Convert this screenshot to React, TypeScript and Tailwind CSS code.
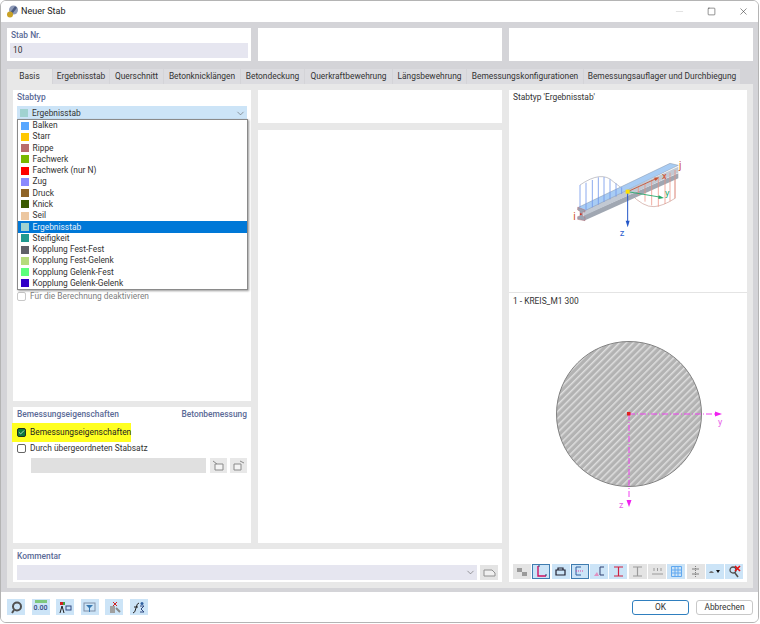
import React from 'react';
import { ChevronDown, Check, Minus, Square, X } from 'lucide-react';

const STAB_TYPES = [
  { name: 'Balken', color: '#57a7ff' },
  { name: 'Starr', color: '#ffc800' },
  { name: 'Rippe', color: '#b96b6b' },
  { name: 'Fachwerk', color: '#78b800' },
  { name: 'Fachwerk (nur N)', color: '#ff0000' },
  { name: 'Zug', color: '#8a8aff' },
  { name: 'Druck', color: '#8f6428' },
  { name: 'Knick', color: '#3a5a00' },
  { name: 'Seil', color: '#ecc7a0' },
  { name: 'Ergebnisstab', color: '#a0d2d0', active: true },
  { name: 'Steifigkeit', color: '#1f9a90' },
  { name: 'Kopplung Fest-Fest', color: '#5f6068' },
  { name: 'Kopplung Fest-Gelenk', color: '#b5db7c' },
  { name: 'Kopplung Gelenk-Fest', color: '#5cff7c' },
  { name: 'Kopplung Gelenk-Gelenk', color: '#3300c8' },
];

const TABS = [
  { label: 'Basis', width: 'w-[45px]' },
  { label: 'Ergebnisstab', width: 'w-[56px]' },
  { label: 'Querschnitt', width: 'w-[53px]' },
  { label: 'Betonknicklängen', width: 'w-[76px]' },
  { label: 'Betondeckung', width: 'w-[63px]' },
  { label: 'Querkraftbewehrung', width: 'w-[87px]' },
  { label: 'Längsbewehrung', width: 'w-[73px]' },
  { label: 'Bemessungskonfigurationen', width: 'w-[116px]' },
  { label: 'Bemessungsauflager und Durchbiegung', width: 'w-[156px]' },
];

function AppIcon() {
  return (
    <svg width="13" height="13" viewBox="0 0 13 13">
      <circle cx="7.5" cy="5" r="4.5" fill="#8f9bb8" />
      <path d="M3 11 L10 2" stroke="#4a5a80" strokeWidth="2.5" />
      <circle cx="4" cy="9.5" r="3" fill="#c9a227" />
    </svg>
  );
}

// drawn in 3x coordinates, same as the crop of the beam
function BeamPreview() {
  const blue = [
    [150, 165, 232],
    [168, 158, 240],
    [187, 150, 232],
    [205, 142, 224],
    [222, 141, 216],
    [240, 148, 208],
    [258, 160, 200],
    [275, 172, 192],
  ];
  const red = [
    [325, 170, 197],
    [345, 161, 215],
    [365, 152, 226],
    [385, 143, 230],
    [405, 135, 222],
    [420, 128, 214],
    [435, 120, 205],
  ];
  return (
    <svg width="180" height="120" viewBox="0 0 540 360" className="block">
      <path d="M150 165 Q215 120 250 155 Q270 172 293 185" fill="none" stroke="#a8a8b0" strokeWidth="2" />
      <path d="M300 190 Q340 232 372 230 Q400 228 435 205 L435 120" fill="none" stroke="#c89c94" strokeWidth="2" />
      {/* beam */}
      <path d="M162 272 L445 145 L445 130 L162 255 Z" fill="#a0a7b2" />
      <path d="M160 258 L445 128 L445 110 L160 240 Z" fill="#c2c9d3" />
      <path d="M145 232 L420 100 L445 106 L165 242 Z" fill="#a8ccf4" stroke="#8a96aa" strokeWidth="1.5" />
      <path d="M143 232 L165 240 L165 246 L158 246 L158 258 L165 262 L165 272 L143 268 L143 260 L150 258 L150 244 L143 240 Z" fill="#9aa2b0" stroke="#b87078" strokeWidth="1.5" />
      {blue.map(([x, y1, y2]) => (
        <line key={x} x1={x} y1={y1} x2={x} y2={y2} stroke="#6f94ea" strokeWidth="2.4" />
      ))}
      {red.map(([x, y1, y2]) => (
        <line key={x} x1={x} y1={y1} x2={x} y2={y2} stroke="#ec8f80" strokeWidth="2.2" />
      ))}
      {/* axes */}
      <line x1="293" y1="185" x2="378" y2="146" stroke="#c8502e" strokeWidth="2.6" />
      <path d="M387 142 L372 143 L377 153 Z" fill="#c8502e" />
      <line x1="293" y1="185" x2="388" y2="201" stroke="#22a868" strokeWidth="2.6" />
      <path d="M402 204 L386 196 L385 207 Z" fill="#22a868" />
      <line x1="293" y1="185" x2="293" y2="276" stroke="#2457c8" strokeWidth="3" />
      <path d="M293 292 L287 272 L299 272 Z" fill="#2457c8" />
      <rect x="287" y="179" width="12" height="12" fill="#ffe000" />
      <rect x="150" y="250" width="5" height="5" fill="#d03020" />
      <text x="447" y="118" fontSize="30" fill="#d0502a">j</text>
      <text x="396" y="148" fontSize="28" fill="#d0502a">x</text>
      <text x="405" y="198" fontSize="28" fill="#22a868">y</text>
      <text x="269" y="318" fontSize="28" fill="#2f5fd0">z</text>
      <text x="130" y="270" fontSize="30" fill="#d0502a">i</text>
    </svg>
  );
}

function SectionPreview() {
  return (
    <svg width="180" height="180" viewBox="0 0 180 180" className="block">
      <defs>
        <pattern id="hatch" width="4.9" height="4.9" patternUnits="userSpaceOnUse" patternTransform="rotate(45)">
          <rect width="4.9" height="4.9" fill="#b3b3b3" />
          <rect width="1.5" height="4.9" fill="#dedede" />
        </pattern>
      </defs>
      <circle cx="85" cy="73" r="72.5" fill="url(#hatch)" stroke="#828282" strokeWidth="1" />
      <line x1="85" y1="73" x2="172" y2="73" stroke="#f040f0" strokeWidth="1" strokeDasharray="6 2 1 2" />
      <line x1="85" y1="73" x2="85" y2="158" stroke="#f040f0" strokeWidth="1" strokeDasharray="6 2 1 2" />
      <path d="M178 73 L171 70.5 L171 75.5 Z" fill="#f020f0" />
      <path d="M85 166 L82.5 159 L87.5 159 Z" fill="#f020f0" />
      <rect x="83" y="71" width="3.5" height="3.5" fill="#e02020" />
      <text x="174" y="84" fontSize="9" fill="#e860e8">y</text>
      <text x="75" y="167" fontSize="9" fill="#e860e8">z</text>
    </svg>
  );
}

function ToolBtn({ on, border, children }: { on?: boolean; border?: boolean; children: React.ReactNode }) {
  return (
    <div className={`w-[18px] h-[15px] flex items-center justify-center ${on ? 'bg-[#cce4f7]' : 'bg-[#e4e4e4]'} ${border ? 'border border-[#3f7cb0]' : ''}`}>
      {children}
    </div>
  );
}

function Ico({ children }: { children: React.ReactNode }) {
  return <svg width="13" height="13" viewBox="0 0 13 13" fill="none">{children}</svg>;
}

function FooterBtn({ children }: { children: React.ReactNode }) {
  return <div className="w-[18px] h-[16px] bg-[#cce4f7] flex items-center justify-center">{children}</div>;
}

export default function App() {
  return (
    <div className="w-[760px] h-[624px] font-['Roboto',sans-serif] text-[8.4px] leading-[11px] text-[#333] bg-white flex flex-col">
      <div className="w-[759px] h-[623px] border border-[#b4b4b4] rounded-[6px] flex flex-col overflow-hidden">
        {/* title bar */}
        <div className="h-[21px] shrink-0 bg-white flex items-center pl-[5px]">
          <AppIcon />
          <span className="ml-[2px] text-[9px] text-[#222]">Neuer Stab</span>
          <div className="ml-auto flex items-center text-[#333]">
            <Minus size={11} strokeWidth={1} className="text-[#c0c0c0] mr-[22px]" />
            <Square size={9} strokeWidth={1.4} className="mr-[22px]" />
            <X size={11} strokeWidth={1.2} className="mr-[9px]" />
          </div>
        </div>

        <div className="flex-1 bg-[#d4d4d8] px-[6px] pt-[6px] flex flex-col">
          {/* top row */}
          <div className="grid grid-cols-[244px_244px_244px] gap-x-[7px] h-[33px] shrink-0">
            <div className="bg-white px-[3px] pt-[1px]">
              <div className="font-medium text-[#5a6a96] h-[12px] leading-[12px] pl-[1px]">Stab Nr.</div>
              <div className="mt-[2px] h-[15px] bg-[#e6e6f0] pl-[3px] leading-[15px]">10</div>
            </div>
            <div className="bg-white" />
            <div className="bg-white" />
          </div>

          {/* tabs */}
          <div className="mt-[8px] h-[15px] flex shrink-0 gap-[1px]">
            {TABS.map((t, i) => (
              <div
                key={t.label}
                className={`h-[15px] flex items-center justify-center whitespace-nowrap ${t.width} ${i === 0 ? 'bg-[#e8e8e8]' : 'bg-[#dcdce0]'}`}
              >
                {t.label}
              </div>
            ))}
          </div>

          {/* tab page */}
          <div className="h-[504px] shrink-0 bg-[#e8e8e8] w-[746px] p-[6px] grid grid-cols-[238px_244px_238px] grid-rows-[33px_7px_1fr_6px_33px] gap-x-[7px]">
            {/* left column */}
            <div className="row-start-1 row-span-3 flex flex-col gap-[6px] relative">
              <div className="bg-white h-[311px] px-[4px] pt-[1px] relative">
                <div className="font-medium text-[#5a6a96] h-[12px] leading-[12px]">Stabtyp</div>
                <div className="mt-[3px] h-[14px] bg-[#cce4f7] flex items-center pl-[3px] pr-[1px]">
                  <span className="w-[8px] h-[8px] bg-[#a0d2d0] mr-[3px]" />
                  <span className="ml-[1px]">Ergebnisstab</span>
                  <ChevronDown size={11} strokeWidth={1.2} className="ml-auto text-[#555]" />
                </div>
                <div className="absolute left-[4px] top-[29px] w-[231px] h-[171px] bg-white border border-[#8a8a8a] shadow-[1px_1px_2px_rgba(0,0,0,0.4)] z-10 flex flex-col">
                  {STAB_TYPES.map((s) => (
                    <div
                      key={s.name}
                      className={`h-[11.27px] flex items-center pl-[3px] ${s.active ? 'bg-[#0078d7] text-[#e8f2fa]' : ''}`}
                    >
                      <span className="w-[8px] h-[8px] mr-[3.5px]" style={{ backgroundColor: s.color }} />
                      <span>{s.name}</span>
                    </div>
                  ))}
                </div>
                <div className="absolute left-[4px] top-[201px] flex items-center text-[#808080]">
                  <span className="w-[9px] h-[9px] rounded-[2px] border border-[#c8c8c8] mr-[4px]" />
                  Für die Berechnung deaktivieren
                </div>
              </div>
              <div className="bg-white flex-1 px-[4px] pt-[2px] relative">
                <div className="flex justify-between font-medium text-[#5a6a96]">
                  <span>Bemessungseigenschaften</span>
                  <span>Betonbemessung</span>
                </div>
                <div className="mt-[3px] h-[19px] w-[119px] -ml-[5px] bg-[#ffff20] flex items-center pl-[5px] text-[#222]">
                  <span className="w-[9px] h-[9px] rounded-[2px] bg-[#0e7a3e] border border-[#203020] flex items-center justify-center mr-[4px]">
                    <Check size={7} strokeWidth={3} className="text-[#c8f0c8]" />
                  </span>
                  Bemessungseigenschaften
                </div>
                <div className="mt-[1px] flex items-center">
                  <span className="w-[9px] h-[9px] rounded-[2px] border border-[#666] mr-[4px]" />
                  Durch übergeordneten Stabsatz
                </div>
                <div className="mt-[4px] ml-[14px] flex gap-[3px] items-center">
                  <div className="w-[176px] h-[15px] bg-[#e0e0e0]" />
                  <div className="ml-[1px] w-[17px] h-[15px] bg-[#e8e8e8] flex items-center justify-center">
                    <Ico>
                      <path d="M3 5 H11 V11 H3 Z M1 2 L5 5" stroke="#8a8a8a" fill="#f4f4f4" />
                    </Ico>
                  </div>
                  <div className="w-[17px] h-[15px] bg-[#e8e8e8] flex items-center justify-center">
                    <Ico>
                      <path d="M2 5 H9 V11 H2 Z M8 2 L12 4" stroke="#8a8a8a" fill="#f4f4f4" />
                    </Ico>
                  </div>
                </div>
              </div>
            </div>

            {/* middle column */}
            <div className="row-start-1 col-start-2 bg-white" />
            <div className="row-start-3 col-start-2 bg-white" />

            {/* right column */}
            <div className="row-start-1 row-span-5 col-start-3 flex flex-col bg-white">
              <div className="h-[203px] border-b border-[#e4e4e4] pl-[4px] pt-[1px] flex flex-col">
                <div className="leading-[12px]">Stabtyp 'Ergebnisstab'</div>
                <div className="ml-[17px] mt-[27px]">
                  <BeamPreview />
                </div>
              </div>
              <div className="flex-1 flex flex-col pl-[4px] pt-[2px]">
                <div className="leading-[12px]">1 - KREIS_M1 300</div>
                <div className="ml-[31px] mt-[34px]">
                  <SectionPreview />
                </div>
                <div className="mt-auto mb-[3px] flex gap-[1.3px]">
                  <ToolBtn>
                    <Ico><path d="M1 3 H6 V7 H1 Z M6 7 H11 V11 H6 Z" fill="#9a9a9a" /></Ico>
                  </ToolBtn>
                  <ToolBtn on border>
                    <Ico><path d="M3 1 V11 H11" stroke="#d01060" strokeWidth="1.4" /><path d="M3 1 H5 M11 11 V9" stroke="#304070" /></Ico>
                  </ToolBtn>
                  <ToolBtn on>
                    <Ico><path d="M2 5 H11 V10 H2 Z M4 5 V3 H9 V5" stroke="#202030" strokeWidth="1.2" /></Ico>
                  </ToolBtn>
                  <ToolBtn on border>
                    <Ico><path d="M3 2 V10 M3 2 H8 M3 10 H8" stroke="#3060a0" /><path d="M3 6 H10" stroke="#e040a0" strokeDasharray="1 1" /></Ico>
                  </ToolBtn>
                  <ToolBtn on>
                    <Ico><path d="M7 2 H11 M7 2 V10 H11" stroke="#304070" /><path d="M1 11 L4 7 L6 11 Z" fill="#e090c0" /></Ico>
                  </ToolBtn>
                  <ToolBtn on>
                    <Ico><path d="M2 2 H11 M2 11 H11 M6.5 2 V11" stroke="#d02040" strokeWidth="1.2" /></Ico>
                  </ToolBtn>
                  <ToolBtn>
                    <Ico><path d="M2 2 H11 M2 11 H11 M6.5 2 V11" stroke="#9a9a9a" strokeWidth="1.2" /></Ico>
                  </ToolBtn>
                  <ToolBtn>
                    <Ico><path d="M1 9 H12" stroke="#9a9a9a" /><path d="M3 3 V6 M6.5 3 V6 M10 3 V6" stroke="#9a9a9a" /></Ico>
                  </ToolBtn>
                  <ToolBtn on>
                    <Ico><path d="M1.5 1.5 H11.5 V11.5 H1.5 Z M1.5 5 H11.5 M1.5 8 H11.5 M5 1.5 V11.5 M8 1.5 V11.5" stroke="#60a8f0" /></Ico>
                  </ToolBtn>
                  <ToolBtn>
                    <Ico><path d="M6.5 1 V12" stroke="#808080" strokeDasharray="1 1" /><path d="M3 4 H10 M3 9 H10" stroke="#808080" /></Ico>
                  </ToolBtn>
                  <ToolBtn on>
                    <Ico><path d="M1 8 Q3 4 6 8 Z" fill="#707070" /><path d="M8 5 H12 L10 8 Z" fill="#111" /></Ico>
                  </ToolBtn>
                  <ToolBtn on>
                    <Ico><circle cx="5" cy="5" r="3" stroke="#505050" strokeWidth="1.3" /><path d="M7 8 L10 12" stroke="#505050" strokeWidth="1.5" /><path d="M7 1 L12 6 M12 1 L7 6" stroke="#e81010" strokeWidth="1.6" /></Ico>
                  </ToolBtn>
                </div>
              </div>
            </div>

            {/* comment */}
            <div className="row-start-5 col-start-1 col-span-2 bg-white px-[4px] pt-[1px]">
              <div className="font-medium text-[#5a6a96] leading-[12px]">Kommentar</div>
              <div className="mt-[3px] flex gap-[3px]">
                <div className="flex-1 h-[15px] bg-[#e6e6f0] flex items-center justify-end pr-[1px]">
                  <ChevronDown size={11} strokeWidth={1.2} className="text-[#555]" />
                </div>
                <div className="w-[18px] h-[15px] bg-[#e4e4e4] flex items-center justify-center">
                  <Ico><path d="M1 4 H9 L12 7 V10 H1 Z" stroke="#909090" fill="#f0f0f0" /></Ico>
                </div>
              </div>
            </div>
          </div>
        </div>

        {/* footer */}
        <div className="h-[30px] shrink-0 bg-white flex items-center pl-[6px] pr-[5px]">
          <div className="flex gap-[6.5px]">
            <FooterBtn>
              <Ico><circle cx="7" cy="5.5" r="4" stroke="#505050" strokeWidth="2" /><path d="M4 9 L2 12" stroke="#505050" strokeWidth="2" /></Ico>
            </FooterBtn>
            <div className="w-[18px] h-[16px] bg-[#cce4f7] flex flex-col items-center">
              <div className="w-[12px] h-[3px] bg-[#7ec87e] mt-[1px]" />
              <span className="text-[7px] leading-[10px] font-medium text-[#304880]">0.00</span>
            </div>
            <FooterBtn>
              <Ico><rect x="1" y="1" width="3" height="3" fill="#d02020" /><rect x="4" y="1" width="2" height="3" fill="#40a040" /><path d="M3 5 L1 12 M3 5 L5 12" stroke="#222" /><rect x="7" y="5" width="5" height="4" stroke="#304880" /></Ico>
            </FooterBtn>
            <FooterBtn>
              <Ico><rect x="1" y="2" width="11" height="8" stroke="#8090a8" /><path d="M3 4 H10 L7 7 V11 H6 V7 Z" fill="#3878b0" /></Ico>
            </FooterBtn>
            <FooterBtn>
              <Ico><rect x="2" y="5" width="5" height="7" fill="#a0a0a0" /><path d="M5 1 L9 5 M9 1 L5 5" stroke="#d02020" /><path d="M8 7 L12 11" stroke="#888" strokeWidth="2" /></Ico>
            </FooterBtn>
            <FooterBtn>
              <svg width="13" height="13" viewBox="0 0 13 13" fill="none"><path d="M1 12 Q3 12 4 7 Q5 2 7 2 M2 6 H6" stroke="#222" /><path d="M8 5 H12 L9 8 L12 11 H8" stroke="#304880" /><circle cx="10" cy="2.5" r="1.5" fill="#3060a0" /></svg>
            </FooterBtn>
          </div>
          <div className="ml-auto flex gap-[7px]">
            <div className="w-[57px] h-[15px] rounded-[3px] border-[1.5px] border-[#2f7fbf] bg-white flex items-center justify-center">OK</div>
            <div className="w-[57px] h-[15px] rounded-[3px] border border-[#c8c8c8] bg-white flex items-center justify-center">Abbrechen</div>
          </div>
        </div>
      </div>
    </div>
  );
}
